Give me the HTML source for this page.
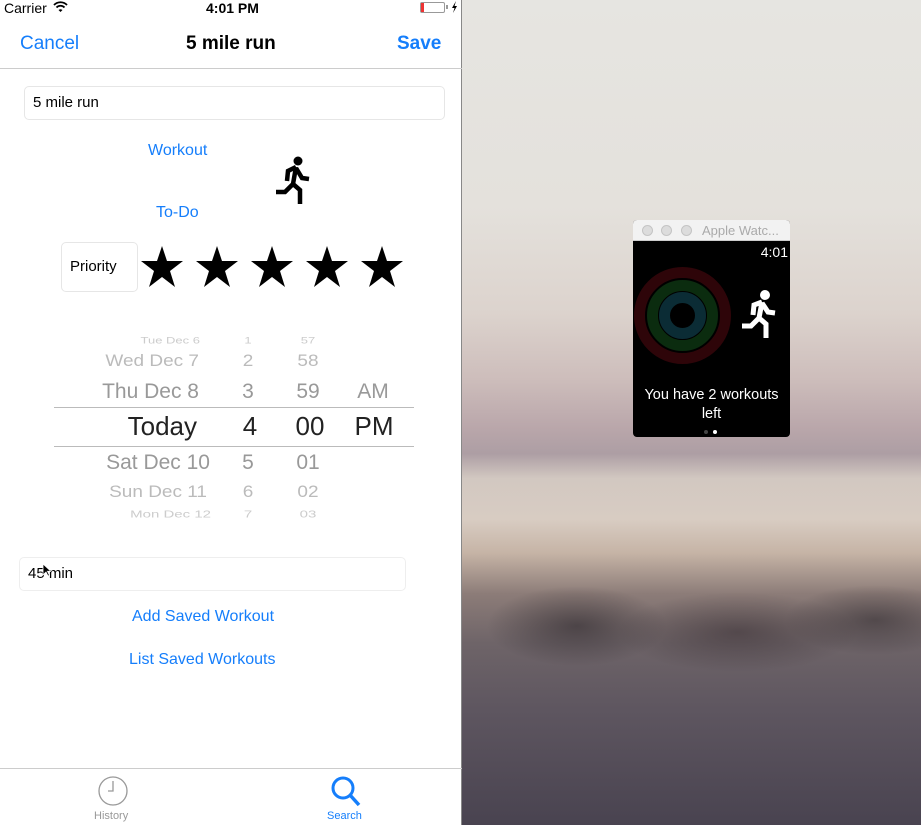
<!DOCTYPE html>
<html><head><meta charset="utf-8"><style>
*{margin:0;padding:0;box-sizing:border-box}
body{width:921px;height:825px;overflow:hidden;font-family:"Liberation Sans",sans-serif;position:relative;background:#fff}
.abs{position:absolute}
.blue{color:#157efb}
.bg{left:462px;top:0;width:459px;height:825px;background:linear-gradient(180deg,#e6e5e1 0%,#e4e1dc 25%,#dcd3cd 38%,#cdbdbb 46%,#b9a6aa 52%,#ad9ea4 55%,#d2c8c1 58%,#d8ccc2 63%,#c6b4a6 67%,#8c7c78 72%,#6e6468 78%,#5e5660 86%,#494350 100%)}
.phone{left:0;top:0;width:462px;height:825px;background:#fff;border-right:1px solid #888}
.pk{position:absolute;white-space:nowrap}
.r{text-align:right}.c{text-align:center}
</style></head><body>
<div class="abs bg"></div>
<div class="abs" style="left:462px;top:560px;width:459px;height:120px;background:radial-gradient(ellipse 90px 40px at 25% 55%,rgba(40,35,40,.55),transparent),radial-gradient(ellipse 120px 40px at 60% 60%,rgba(50,40,45,.5),transparent),radial-gradient(ellipse 90px 35px at 90% 50%,rgba(40,35,40,.5),transparent)"></div>
<div class="abs phone">
 <div class="abs" style="left:4px;top:0;font-size:14px">Carrier</div>
 <svg class="abs" style="left:53px;top:1px" width="15" height="12" viewBox="0 0 15 12"><path d="M1 4a9 9 0 0 1 13 0M3.5 6.5a5.5 5.5 0 0 1 8 0" stroke="#000" stroke-width="1.8" fill="none"/><path d="M5.5 9a3 3 0 0 1 4 0L7.5 11z" fill="#000"/></svg>
 <div class="abs" style="left:206px;top:0;font-size:14px;font-weight:bold">4:01 PM</div>
 <div class="abs" style="left:420px;top:2px;width:25px;height:11px;border:1px solid #999;border-radius:2px"><div style="width:3px;height:9px;background:#e33"></div></div>
 <div class="abs" style="left:446px;top:5px;width:2px;height:4px;background:#999"></div>
 <svg class="abs" style="left:451px;top:1px" width="7" height="12"><path d="M5 0L1 7h2.5L2 12l4-7H3.5z" fill="#000"/></svg>
 <div class="abs blue" style="left:20px;top:33px;font-size:19px">Cancel</div>
 <div class="abs" style="left:186px;top:33px;font-size:19px;font-weight:bold">5 mile run</div>
 <div class="abs blue" style="left:397px;top:33px;font-size:19px;font-weight:bold">Save</div>
 <div class="abs" style="left:0;top:68px;width:462px;height:1px;background:#ccc"></div>
 <div class="abs" style="left:24px;top:86px;width:421px;height:34px;border:1px solid #e6e6e6;border-radius:5px;padding:7px 8px;font-size:15px">5 mile run</div>
 <div class="abs blue" style="left:148px;top:142px;font-size:16px">Workout</div>
 <div class="abs blue" style="left:156px;top:204px;font-size:16px">To-Do</div>
 <svg class="abs" style="left:274px;top:154px" width="38" height="52" viewBox="0 0 38 52"><circle cx="24" cy="7" r="4.5" fill="#000"/><path d="M22 13 L14 17 L13 27 M22 13 L19 30 L11 38 L2 38 M19 30 L26 36 L26 50 M22 14 L28 24 L35 25" stroke="#000" stroke-width="4.5" fill="none" stroke-linejoin="miter"/></svg>
 <div class="abs" style="left:61px;top:242px;width:77px;height:50px;border:1px solid #e6e6e6;border-radius:5px;font-size:15px;line-height:48px;padding-left:8px">Priority</div>
 <svg class="abs" style="left:140px;top:245px" width="270" height="44" viewBox="0 0 270 44">
  <defs><path id="s" d="M21 1 L26 16 L42 16 L29 26 L34 42 L21 32 L8 42 L13 26 L0 16 L16 16 Z"/></defs>
  <use href="#s" x="1"/><use href="#s" x="56"/><use href="#s" x="111"/><use href="#s" x="166"/><use href="#s" x="221"/>
 </svg>
 <!-- picker -->
 <div class="abs" style="left:54px;top:407px;width:360px;height:1px;background:#bbb"></div>
 <div class="abs" style="left:54px;top:446px;width:360px;height:1px;background:#bbb"></div>
 <div class="pk r" style="left:60px;top:333px;width:140px;font-size:13px;color:#ccc;transform:scaleY(.7)">Tue Dec 6</div>
 <div class="pk r" style="left:50px;top:351px;width:149px;font-size:19px;color:#bbb;transform:scaleY(.85)">Wed Dec 7</div>
 <div class="pk r" style="left:50px;top:380px;width:149px;font-size:21px;color:#999">Thu Dec 8</div>
 <div class="pk r" style="left:50px;top:411px;width:147px;font-size:26px;color:#222">Today</div>
 <div class="pk r" style="left:50px;top:451px;width:160px;font-size:21px;color:#999">Sat Dec 10</div>
 <div class="pk r" style="left:50px;top:482px;width:157px;font-size:19px;color:#bbb;transform:scaleY(.85)">Sun Dec 11</div>
 <div class="pk r" style="left:50px;top:506px;width:161px;font-size:15px;color:#ccc;transform:scaleY(.7)">Mon Dec 12</div>
 <div class="pk c" style="left:230px;top:333px;width:36px;font-size:13px;color:#ccc;transform:scaleY(.7)">1</div>
 <div class="pk c" style="left:230px;top:351px;width:36px;font-size:19px;color:#bbb;transform:scaleY(.85)">2</div>
 <div class="pk c" style="left:230px;top:380px;width:36px;font-size:21px;color:#999">3</div>
 <div class="pk c" style="left:230px;top:411px;width:40px;font-size:26px;color:#222">4</div>
 <div class="pk c" style="left:230px;top:451px;width:36px;font-size:21px;color:#999">5</div>
 <div class="pk c" style="left:230px;top:482px;width:36px;font-size:19px;color:#bbb;transform:scaleY(.85)">6</div>
 <div class="pk c" style="left:230px;top:506px;width:36px;font-size:15px;color:#ccc;transform:scaleY(.7)">7</div>
 <div class="pk c" style="left:290px;top:333px;width:36px;font-size:13px;color:#ccc;transform:scaleY(.7)">57</div>
 <div class="pk c" style="left:290px;top:351px;width:36px;font-size:19px;color:#bbb;transform:scaleY(.85)">58</div>
 <div class="pk c" style="left:290px;top:380px;width:36px;font-size:21px;color:#999">59</div>
 <div class="pk c" style="left:290px;top:411px;width:40px;font-size:26px;color:#222">00</div>
 <div class="pk c" style="left:290px;top:451px;width:36px;font-size:21px;color:#999">01</div>
 <div class="pk c" style="left:290px;top:482px;width:36px;font-size:19px;color:#bbb;transform:scaleY(.85)">02</div>
 <div class="pk c" style="left:290px;top:506px;width:36px;font-size:15px;color:#ccc;transform:scaleY(.7)">03</div>
 <div class="pk c" style="left:352px;top:380px;width:42px;font-size:21px;color:#999">AM</div>
 <div class="pk c" style="left:351px;top:411px;width:46px;font-size:26px;color:#222">PM</div>
 <div class="abs" style="left:19px;top:557px;width:387px;height:34px;border:1px solid #eee;border-radius:5px;padding:7px 8px;font-size:15px">45 min</div>
 <svg class="abs" style="left:42px;top:563px" width="9" height="14"><path d="M1 1v11l3-3 2 4 1.5-.7-2-4H9z" fill="#000" stroke="#fff" stroke-width=".8"/></svg>
 <div class="abs blue" style="left:132px;top:608px;font-size:16px">Add Saved Workout</div>
 <div class="abs blue" style="left:129px;top:651px;font-size:16px">List Saved Workouts</div>
 <div class="abs" style="left:0;top:768px;width:462px;height:1px;background:#ccc"></div>
 <svg class="abs" style="left:97px;top:775px" width="32" height="32"><circle cx="16" cy="16" r="14" stroke="#999" stroke-width="1.3" fill="none"/><path d="M16 6v10h-5" stroke="#999" stroke-width="1.3" fill="none"/></svg>
 <div class="abs" style="left:94px;top:810px;font-size:11px;color:#999">History</div>
 <svg class="abs" style="left:330px;top:775px" width="32" height="32"><circle cx="13" cy="13" r="10" stroke="#157efb" stroke-width="3" fill="none"/><path d="M20 20l9 10" stroke="#157efb" stroke-width="3.5"/></svg>
 <div class="abs blue" style="left:327px;top:810px;font-size:11px">Search</div>
</div>
<!-- watch -->
<div class="abs" style="left:633px;top:220px;width:157px;height:217px;background:#000;border-radius:4px;overflow:hidden">
 <div style="height:21px;background:#f2f2f2;border-bottom:1px solid #ccc;position:relative">
  <div class="abs" style="left:9px;top:5px;width:11px;height:11px;border-radius:50%;background:#dcdcdc;border:1px solid #c4c4c4"></div>
  <div class="abs" style="left:28px;top:5px;width:11px;height:11px;border-radius:50%;background:#dcdcdc;border:1px solid #c4c4c4"></div>
  <div class="abs" style="left:48px;top:5px;width:11px;height:11px;border-radius:50%;background:#dcdcdc;border:1px solid #c4c4c4"></div>
  <div class="abs" style="left:69px;top:3px;font-size:13px;color:#aaa">Apple Watc...</div>
 </div>
 <div class="abs" style="right:2px;top:24px;color:#fff;font-size:14px">4:01</div>
 <div class="abs" style="left:1px;top:47px;width:97px;height:97px;border-radius:50%;border:11px solid #2e0509"></div>
 <div class="abs" style="left:14px;top:60px;width:71px;height:71px;border-radius:50%;border:11px solid #0b2c0f"></div>
 <div class="abs" style="left:26px;top:72px;width:47px;height:47px;border-radius:50%;border:11px solid #0b2c35"></div>
 <svg class="abs" style="left:106px;top:68px" width="40" height="52" viewBox="0 0 38 52"><circle cx="25" cy="7" r="5" fill="#fff"/><path d="M22 14 L14 17 L13 27 M22 14 L19 30 L11 38 L2 38 M19 30 L26 36 L26 50 M22 15 L28 24 L35 25" stroke="#fff" stroke-width="5" fill="none"/></svg>
 <div class="abs" style="left:0;top:166px;width:157px;text-align:center;color:#fff;font-size:14.5px;line-height:19px">You have 2 workouts<br>left</div>
 <div class="abs" style="left:71px;top:210px;width:4px;height:4px;border-radius:50%;background:#444"></div>
 <div class="abs" style="left:80px;top:210px;width:4px;height:4px;border-radius:50%;background:#fff"></div>
</div>
</body></html>
